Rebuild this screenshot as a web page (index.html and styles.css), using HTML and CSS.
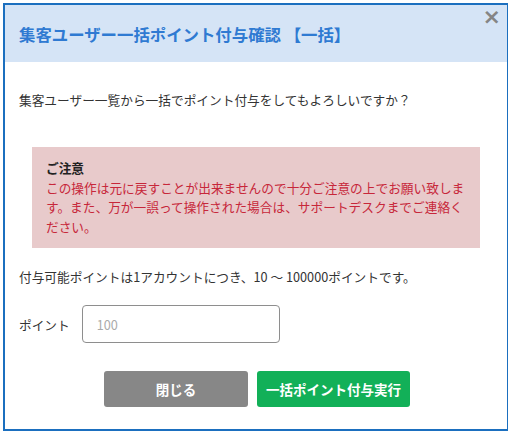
FILE: index.html
```html
<!DOCTYPE html>
<html lang="ja">
<head>
  <meta charset="UTF-8" />
  <title>集客ユーザー一括ポイント付与確認</title>
  <link rel="stylesheet" href="styles.css">
</head>
<body>

  <div class="modal">
    <div class="modal-header">
      <h2 class="modal-title">集客ユーザー一括ポイント付与確認 【一括】</h2>
      <span class="close">&times;</span>
    </div>

    <div class="modal-body">
      <p class="lead">集客ユーザー一覧から一括でポイント付与をしてもよろしいですか？</p>

      <div class="caution">
        <div class="caution-title">ご注意</div>
        <div class="caution-text">この操作は元に戻すことが出来ませんので十分ご注意の上でお願い致します。また、万が一誤って操作された場合は、サポートデスクまでご連絡ください。</div>
      </div>

      <p class="note">付与可能ポイントは1アカウントにつき、10 ～ 100000ポイントです。</p>

      <div class="field">
        <label for="point">ポイント</label>
        <input id="point" type="text" placeholder="100" />
      </div>

      <div class="actions">
        <button type="button" class="btn btn-close">閉じる</button>
        <button type="button" class="btn btn-run">一括ポイント付与実行</button>
      </div>
    </div>
  </div>

</body>
</html>
```

FILE: styles.css
```css
* { box-sizing: border-box; }
body {
  margin: 3px;
  font-family: 'Noto Sans CJK JP', 'Noto Sans', sans-serif;
  color: #333;
  background: #fff;
}
.modal {
  width: 506px;
  height: 428px;
  border: 2px solid #1b6fbf;
  background: white;
}
.modal-header {
  position: relative;
  background: #d5e4f6;
  height: 57px;
  padding: 0 14px;
  display: flex;
  align-items: center;
}
.modal-title {
  margin: 0;
  font-size: 16.4px;
  font-weight: bold;
  color: #2f7ad2;
}
.close {
  position: absolute;
  top: 0;
  right: 6px;
  font-family: 'DejaVu Sans', sans-serif;
  font-size: 22px;
  font-weight: bold;
  color: #858585;
  line-height: 24px;
  cursor: pointer;
}
.modal-body {
  padding: 28px 14px 0;
  font-size: 12.7px;
}
.lead {
  margin: 0;
  line-height: 20px;
}
.caution {
  margin: 37px 13px 0;
  background: #e8cacb;
  padding: 11px 14px 12px;
  line-height: 19.5px;
}
.caution-title {
  font-weight: bold;
  color: #222;
}
.caution-text {
  color: #c7273a;
}
.note {
  margin: 19px 0 0;
  line-height: 20px;
}
.field {
  display: flex;
  align-items: center;
  gap: 12px;
  margin-top: 18px;
}
.field label {
  font-size: 12.7px;
}
.field input {
  width: 198px;
  height: 38px;
  border: 1px solid #8e8e8e;
  border-radius: 4px;
  padding: 0 14px;
  font-family: 'Noto Sans CJK JP', 'Noto Sans', sans-serif;
  font-size: 12.7px;
  color: #333;
}
.field input::placeholder {
  color: #aaa;
}
.actions {
  display: flex;
  justify-content: center;
  gap: 9px;
  margin-top: 28px;
  padding-left: 2px;
}
.btn {
  height: 36px;
  border: none;
  border-radius: 3px;
  color: white;
  font-family: 'Noto Sans CJK JP', 'Noto Sans', sans-serif;
  font-size: 13.5px;
  font-weight: bold;
  cursor: pointer;
}
.btn-close {
  width: 144px;
  background: #878787;
}
.btn-run {
  width: 153px;
  background: #12b058;
}
```
